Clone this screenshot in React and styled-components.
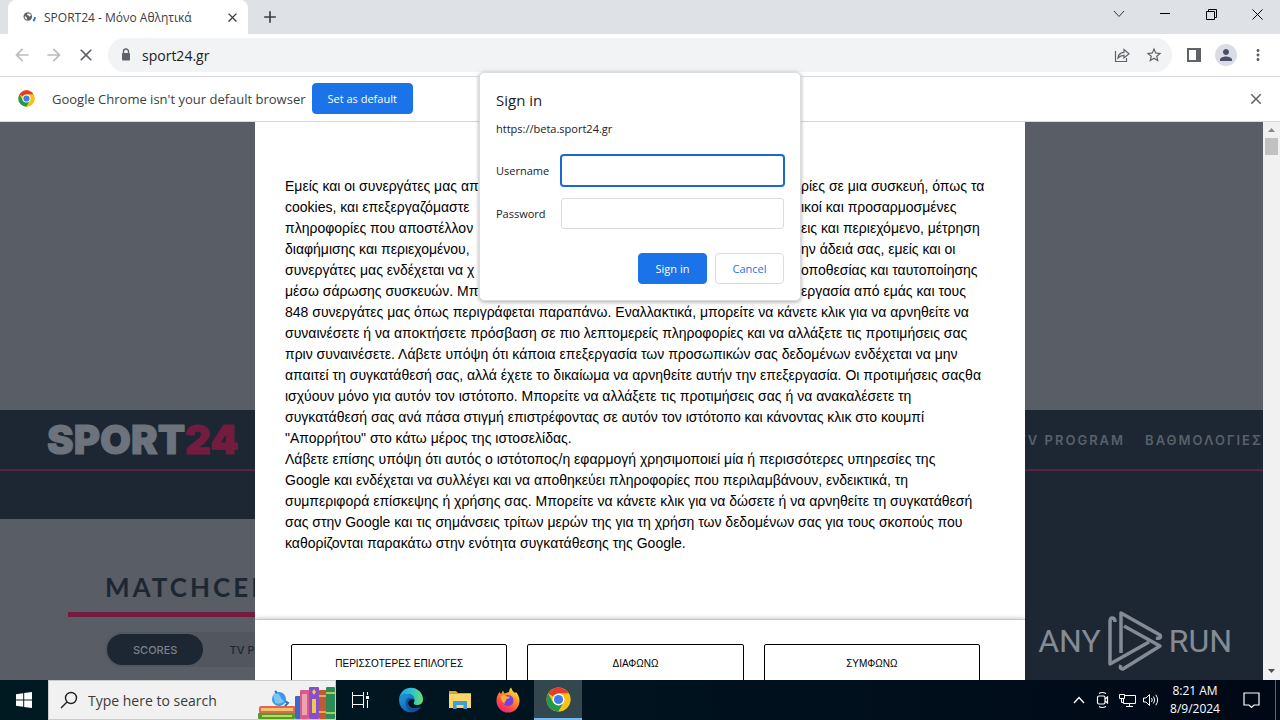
import React from 'react'
import styled, { createGlobalStyle } from 'styled-components'
import { MdArrowBack, MdArrowForward, MdClose, MdStarBorder, MdPerson, MdMoreVert, MdAdd } from 'react-icons/md'

const GlobalStyle = createGlobalStyle`
    * { box-sizing: border-box; }
    body {
        margin: 0;
        overflow: hidden;
        font-family: "Open Sans", "Noto Sans", sans-serif;
        color: #202124;
    }
    button, input { font-family: inherit; margin: 0; }
`

const Desktop = styled.div`
    position: relative;
    display: flex;
    flex-direction: column;
    height: 100vh;
    overflow: hidden;
`

const IconButton = styled.button`
    display: flex;
    align-items: center;
    justify-content: center;
    flex: none;
    width: ${p => p.$size || 32}px;
    height: ${p => p.$size || 32}px;
    padding: 0;
    border: 0;
    border-radius: 50%;
    background: transparent;
    color: ${p => p.$color || '#5f6368'};
`

/* tab strip */

const TabStrip = styled.header`
    display: flex;
    flex: none;
    height: 34px;
    padding-left: 8px;
    background: #dee1e6;
`

const Tab = styled.div`
    display: flex;
    align-items: center;
    width: 240px;
    padding: 0 8px 0 14px;
    border-radius: 8px 8px 0 0;
    background: #fff;
    font-size: 12px;
    color: #3c4043;
    svg { flex: none; }
`

const TabTitle = styled.span`
    flex: 1;
    margin-left: 6px;
    white-space: nowrap;
`

const NewTab = styled(IconButton)`
    margin: 1px 0 0 6px;
`

const WindowButtons = styled.div`
    display: flex;
    margin-left: auto;
`

const WindowButton = styled.button`
    display: flex;
    align-items: center;
    justify-content: center;
    width: 46px;
    height: 28px;
    padding: 0;
    border: 0;
    background: transparent;
    color: #000;
`

/* toolbar */

const Toolbar = styled.nav`
    display: flex;
    align-items: center;
    flex: none;
    height: 43px;
    padding: 0 6px;
    border-bottom: 1px solid #dadce0;
    background: #fff;
`

const AddressBar = styled.div`
    display: flex;
    align-items: center;
    flex: 1;
    height: 34px;
    margin: 0 6px;
    padding: 0 2px 0 10px;
    border-radius: 17px;
    background: #f1f3f4;
    color: #5f6368;
`

const AddressInput = styled.input`
    flex: 1;
    min-width: 0;
    padding: 0 0 0 8px;
    border: 0;
    outline: 0;
    background: transparent;
    font-size: 14px;
    color: #202124;
`

/* info bar */

const InfoBar = styled.div`
    display: flex;
    align-items: center;
    flex: none;
    height: 45px;
    padding: 0 8px 1px 18px;
    border-bottom: 1px solid #d5d7da;
    background: #fff;
    font-size: 13px;
    color: #3c4043;
`

const InfoText = styled.span`
    margin: 0 6px 0 17px;
    white-space: nowrap;
`

const Button = styled.button`
    min-width: 69px;
    height: 31px;
    padding: 0 15px;
    border: 1px solid ${p => (p.$primary ? '#1a73e8' : '#dadce0')};
    border-radius: 4px;
    background: ${p => (p.$primary ? '#1a73e8' : '#fff')};
    font-size: 11px;
    line-height: 28px;
    white-space: nowrap;
    color: ${p => (p.$primary ? '#fff' : '#1a73e8')};
`

const InfoClose = styled(IconButton)`
    margin-left: auto;
`

/* web page */

const Viewport = styled.div`
    position: relative;
    display: flex;
    flex: 1;
    min-height: 0;
`

const Site = styled.div`
    display: flex;
    flex-direction: column;
    flex: 1;
    min-width: 0;
    overflow: hidden;
    background: #595d66;
`

const AdSlot = styled.div`
    flex: none;
    height: 288px;
`

const SiteHeader = styled.div`
    flex: none;
    background: #1c2733;
`

const SiteNav = styled.div`
    display: flex;
    align-items: center;
    justify-content: space-between;
    height: 61px;
    padding: 0 0 0 47px;
    border-bottom: 2px solid #5b2340;
`

const SubNav = styled.div`
    height: 48px;
`

const Logo = styled.a`
    font-family: Inter, sans-serif;
    font-size: 40px;
    font-weight: 900;
    line-height: 60px;
    text-decoration: none;
    color: #6d737d;
    -webkit-text-stroke: 1px #6d737d;
    em {
        font-style: normal;
        color: #741c40;
        -webkit-text-stroke: 1px #741c40;
    }
`

const NavLinks = styled.div`
    display: flex;
    gap: 20px;
`

const NavLink = styled.a`
    font-family: Inter, sans-serif;
    font-size: 13px;
    font-weight: 600;
    letter-spacing: 2px;
    white-space: nowrap;
    text-decoration: none;
    color: #59606a;
`

const SiteBody = styled.div`
    display: grid;
    grid-template-columns: 1fr 1fr;
    flex: 1;
`

const MatchCenter = styled.section`
    padding: 51px 0 0 68px;
`

const MatchHeading = styled.h2`
    margin: 0;
    padding: 0 0 8px 37px;
    border-bottom: 5px solid #741c40;
    font-family: Lato, sans-serif;
    font-size: 26px;
    font-weight: 700;
    line-height: 34px;
    letter-spacing: 3px;
    color: #1c2733;
`

const Pills = styled.div`
    display: flex;
    margin: 15px 0 0 37px;
    padding: 2px;
    border-radius: 18px;
    background: #51565f;
`

const Pill = styled.button`
    height: 31px;
    padding: 0 26px;
    border: 0;
    border-radius: 16px;
    background: ${p => (p.$active ? '#1c2733' : 'transparent')};
    font-family: Inter, sans-serif;
    font-size: 11px;
    font-weight: 500;
    color: ${p => (p.$active ? '#7b818a' : '#1c2733')};
`

const DarkColumn = styled.aside`
    background: #1c2733;
`

const ScrollBar = styled.div`
    display: flex;
    flex-direction: column;
    align-items: center;
    flex: none;
    width: 17px;
    background: #f1f1f1;
`

const ScrollThumb = styled.div`
    width: 13px;
    height: 17px;
    margin-bottom: auto;
    background: #c1c1c1;
`

/* consent window, over the page */

const ConsentLayer = styled.div`
    position: absolute;
    inset: 0;
    display: flex;
    justify-content: center;
    pointer-events: none;
`

const Consent = styled.div`
    display: flex;
    flex-direction: column;
    width: 770px;
    max-width: 100%;
    overflow: hidden;
    background: #fff;
    pointer-events: auto;
`

const ConsentText = styled.div`
    flex: 1;
    min-height: 0;
    padding: 54px 30px 0;
    overflow: hidden;
    font-family: "Liberation Sans", sans-serif;
    font-size: 14px;
    line-height: 21px;
    color: #000;
`

const Line = styled.span`
    display: block;
    white-space: nowrap;
`

/* a line that runs on both sides of the sign in dialog */
const SplitLine = styled.span`
    display: grid;
    grid-template-columns: 1fr 1fr;
    column-gap: 322px;
    white-space: nowrap;
    span { min-width: 0; }
    span:first-child { overflow: hidden; }
`

const ConsentFooter = styled.div`
    display: flex;
    flex: none;
    gap: 20px;
    height: 61px;
    padding: 24px 45px 0 36px;
    border-top: 1px solid #c8c8c8;
    box-shadow: 0 -1px 4px rgba(0, 0, 0, 0.2);
`

const ConsentButton = styled.button`
    flex: 1;
    height: 38px;
    padding: 0;
    border: 1px solid #000;
    border-radius: 2px;
    background: #fff;
    font-family: "Liberation Sans", sans-serif;
    font-size: 10px;
    color: #000;
`

const Watermark = styled.div`
    position: absolute;
    right: 48px;
    bottom: 6px;
    display: flex;
    align-items: center;
    gap: 6px;
    font-family: Roboto, sans-serif;
    font-size: 32px;
    line-height: 66px;
    color: #858b94;
`

/* sign in dialog */

const DialogLayer = styled.div`
    position: absolute;
    inset: 72px 0 auto;
    display: flex;
    justify-content: center;
    pointer-events: none;
`

const Dialog = styled.form`
    width: 322px;
    padding: 16px;
    border: 1px solid #dadce0;
    border-radius: 5px;
    background: #fff;
    box-shadow: 0 1px 4px rgba(0, 0, 0, 0.35);
    font-size: 11px;
    pointer-events: auto;
`

const DialogTitle = styled.h1`
    margin: 0;
    font-size: 15px;
    font-weight: 400;
    line-height: 22px;
`

const DialogHost = styled.div`
    margin: 9px 0 17px;
    line-height: 18px;
`

const Fields = styled.div`
    display: grid;
    grid-template-columns: 65px 1fr;
    align-items: center;
    row-gap: 12px;
`

const Field = styled.input`
    min-width: 0;
    height: 31px;
    padding: 0 8px;
    border: 1px solid ${p => (p.$active ? '#1967d2' : '#dadce0')};
    border-radius: 3px;
    outline: 0;
    box-shadow: ${p => (p.$active ? '0 0 0 1px #1967d2' : 'none')};
    font-size: 12px;
`

const DialogButtons = styled.div`
    display: flex;
    justify-content: flex-end;
    gap: 8px;
    margin-top: 24px;
`

/* taskbar */

const Taskbar = styled.footer`
    display: flex;
    flex: none;
    height: 40px;
    background: linear-gradient(90deg, #001a22, #00131f 50%, #000816);
`

const TaskButton = styled.button`
    display: flex;
    align-items: center;
    justify-content: center;
    flex: none;
    width: ${p => p.$width || 48}px;
    height: 40px;
    padding: 0;
    border: 0;
    border-bottom: ${p => (p.$active ? '2px solid #76b9ed' : '0')};
    background: ${p => (p.$active ? '#33474f' : 'transparent')};
    color: #fff;
`

const SearchBox = styled.label`
    display: flex;
    align-items: center;
    flex: none;
    width: 288px;
    padding-left: 11px;
    border: 1px solid #c9cbcc;
    background: #f1f1f1;
    overflow: hidden;
    svg { flex: none; }
`

const SearchInput = styled.input`
    flex: 1;
    min-width: 0;
    padding: 0 0 0 10px;
    border: 0;
    outline: 0;
    background: transparent;
    font-size: 14px;
    color: #3b3b3b;
    &::placeholder { color: #3b3b3b; opacity: 1; }
`

const Apps = styled.div`
    display: flex;
`

const Tray = styled.div`
    display: flex;
    margin-left: auto;
    padding-right: 4px;
    color: #fff;
`

const Clock = styled.time`
    width: 64px;
    padding-top: 2px;
    font-size: 12px;
    line-height: 18px;
    text-align: center;
`

const ShowDesktop = styled.div`
    width: 1px;
    background: #5a626e;
`

const splitLines = [
    ['Εμείς και οι συνεργάτες μας απ', 'ρίες σε μια συσκευή, όπως τα'],
    ['cookies, και επεξεργαζόμαστε', 'ικοί και προσαρμοσμένες'],
    ['πληροφορίες που αποστέλλον', 'εις και περιεχόμενο, μέτρηση'],
    ['διαφήμισης και περιεχομένου,', 'ην άδειά σας, εμείς και οι'],
    ['συνεργάτες μας ενδέχεται να χ', 'οποθεσίας και ταυτοποίησης'],
    ['μέσω σάρωσης συσκευών. Μπ', 'εργασία από εμάς και τους'],
]

const consentLines = [
    '848 συνεργάτες μας όπως περιγράφεται παραπάνω. Εναλλακτικά, μπορείτε να κάνετε κλικ για να αρνηθείτε να',
    'συναινέσετε ή να αποκτήσετε πρόσβαση σε πιο λεπτομερείς πληροφορίες και να αλλάξετε τις προτιμήσεις σας',
    'πριν συναινέσετε. Λάβετε υπόψη ότι κάποια επεξεργασία των προσωπικών σας δεδομένων ενδέχεται να μην',
    'απαιτεί τη συγκατάθεσή σας, αλλά έχετε το δικαίωμα να αρνηθείτε αυτήν την επεξεργασία. Οι προτιμήσεις σαςθα',
    'ισχύουν μόνο για αυτόν τον ιστότοπο. Μπορείτε να αλλάξετε τις προτιμήσεις σας ή να ανακαλέσετε τη',
    'συγκατάθεσή σας ανά πάσα στιγμή επιστρέφοντας σε αυτόν τον ιστότοπο και κάνοντας κλικ στο κουμπί',
    '"Απορρήτου" στο κάτω μέρος της ιστοσελίδας.',
    'Λάβετε επίσης υπόψη ότι αυτός ο ιστότοπος/η εφαρμογή χρησιμοποιεί μία ή περισσότερες υπηρεσίες της',
    'Google και ενδέχεται να συλλέγει και να αποθηκεύει πληροφορίες που περιλαμβάνουν, ενδεικτικά, τη',
    'συμπεριφορά επίσκεψης ή χρήσης σας. Μπορείτε να κάνετε κλικ για να δώσετε ή να αρνηθείτε τη συγκατάθεσή',
    'σας στην Google και τις σημάνσεις τρίτων μερών της για τη χρήση των δεδομένων σας για τους σκοπούς που',
    'καθορίζονται παρακάτω στην ενότητα συγκατάθεσης της Google.',
]

const ChromeIcon = ({ size }) => (
    <svg width={size} height={size} viewBox="0 0 48 48">
        <circle cx="24" cy="24" r="23" fill="#fbc116" />
        <path d="M24 24 4.1 12.5A23 23 0 0 1 43.9 12.5H24Z" fill="#e33b2e" />
        <path d="M4.1 12.5A23 23 0 0 0 24 47L34 29.7 24 24 14 29.7Z" fill="#229a4b" />
        <path d="M24 47A23 23 0 0 0 43.9 12.5H24L34 29.7Z" fill="#fbc116" />
        <circle cx="24" cy="24" r="11.5" fill="#fff" />
        <circle cx="24" cy="24" r="8.8" fill="#3b7ded" />
    </svg>
)

const FaviconIcon = () => (
    <svg width="16" height="16" viewBox="0 0 16 16">
        <circle cx="5.8" cy="7.5" r="4.3" fill="#5f6368" />
        <path d="M2.8 7 4.600 8.200 5.200 10.400 4 10.200 2.800 8.800ZM5.500 4.600 8 4.800 9 6.500 7.400 7.800 6.800 6.600 5 6Z" fill="#fff" />
        <path d="M12.900 8Q13 10.300 11.300 12" fill="none" stroke="#1a73e8" strokeWidth="1.8" />
    </svg>
)

const LockIcon = () => (
    <svg width="16" height="16" viewBox="0 0 16 16">
        <path d="M5.500 7V4.500A2.500 2.500 0 0 1 10.500 4.500V7" fill="none" stroke="currentColor" strokeWidth="1.400" />
        <rect x="4" y="6" width="8" height="7.500" rx="1" fill="currentColor" />
    </svg>
)

const WindowsIcon = () => (
    <svg width="16" height="16" viewBox="0 0 16 16" fill="#fff">
        <path d="M0 2.3 7.2 1.2V7.5H0ZM8.2 1 16 0V7.5H8.2ZM0 8.5H7.2V14.8L0 13.7ZM8.2 8.5H16V16L8.2 15Z" />
    </svg>
)

const EdgeIcon = () => (
    <svg width="26" height="26" viewBox="0 0 26 26">
        <defs>
            <linearGradient id="edgeTop" x1="0" x2="1">
                <stop offset="0" stopColor="#1c9fe0" />
                <stop offset="0.5" stopColor="#2dc0d6" />
                <stop offset="1" stopColor="#6be06a" />
            </linearGradient>
            <linearGradient id="edgeLow" x1="0" x2="1" y1="0" y2="1">
                <stop offset="0" stopColor="#1f9be5" />
                <stop offset="1" stopColor="#0c4a94" />
            </linearGradient>
        </defs>
        <path d="M1 13A12 12 0 0 1 25 12.500C25 16.500 22 18 19 18 16.500 18 15.300 17 15.800 16 18 12 15 7 9.500 7 5 7 2 9.500 1 13Z" fill="url(#edgeTop)" />
        <path d="M1 13C2 9.500 5 7 9.500 7 13.500 7 16.500 9.500 16.400 13 14.500 10.800 10 12 10 16 10 20.500 15.500 22.500 21 20.500 22.500 20 23.300 19.500 22.600 20.500A12 12 0 0 1 1 13Z" fill="url(#edgeLow)" />
        <path d="M9.500 11.500C6 15 7.500 22.500 14 24.900 18 24.700 21 22.800 22.700 20.300 18 22.500 10.300 21.500 10 16 10 13 12.500 11.800 14.500 12.200 13 10.800 11 10.600 9.500 11.500Z" fill="#114f9f" />
    </svg>
)

const FolderIcon = () => (
    <svg width="24" height="20" viewBox="0 0 24 20">
        <path d="M1 1H8L10 3H23V18H1Z" fill="#e0a32c" />
        <path d="M1 4H23V18H1Z" fill="#fbd768" />
        <path d="M5 19V12Q5 11 6 11H18Q19 11 19 12V19H15.500V15H8.500V19Z" fill="#3f9bdc" />
    </svg>
)

const FirefoxIcon = () => (
    <svg width="26" height="26" viewBox="0 0 26 26">
        <defs>
            <linearGradient id="fox" x1="0.8" x2="0.2" y1="0" y2="1">
                <stop offset="0" stopColor="#fff04a" />
                <stop offset="0.35" stopColor="#ff9a26" />
                <stop offset="0.7" stopColor="#ff4a45" />
                <stop offset="1" stopColor="#e21c80" />
            </linearGradient>
        </defs>
        <path d="M3 7.500 4.500 5 6 7 8 3.500 9.500 6.500 14 5Q14 2 16 0.500 17 4 20 6L21 5Q24.500 9 24.500 14A11.500 11.500 0 0 1 1.500 14Q1.300 10 3 7.500Z" fill="url(#fox)" />
        <circle cx="13" cy="13.500" r="5.500" fill="#7a3fe0" />
        <path d="M5.500 9Q9 7.500 12 9.500L15 9.800Q14.500 11.500 12 12 10.500 12.500 11 14 9 14.500 9.500 17 6 14 5.500 9Z" fill="#ffab2d" />
    </svg>
)

const BooksIcon = () => (
    <svg width="77" height="38" viewBox="0 0 77 38">
        <rect x="1" y="25" width="37" height="8" rx="2" fill="#d96b54" />
        <rect x="3" y="27" width="32" height="3" fill="#f3c06c" />
        <rect x="0" y="32" width="37" height="6" rx="1" fill="#5a9a2c" />
        <rect x="4" y="34" width="30" height="2" fill="#b4dc59" />
        <circle cx="21" cy="18" r="7" fill="#3d96e8" />
        <path d="M15 14Q20 10 22 15T27 20Q22 24 17 22Z" fill="#7cc7f7" />
        <path d="M17 10 19 12M27 20 30 22 27 25" fill="none" stroke="#2d6fc0" strokeWidth="2" />
        <rect x="37" y="15" width="6" height="23" rx="1" fill="#3d67c8" />
        <rect x="42" y="9" width="9" height="29" rx="1" fill="#d95c86" />
        <rect x="44" y="13" width="5" height="21" fill="#f0a0ae" />
        <rect x="51" y="6" width="10" height="32" rx="1" fill="#8850c8" />
        <path d="M56 8 58 11 56 14 54 11ZM54 18H58V32H54Z" fill="#f0c84f" />
        <rect x="61" y="9" width="8" height="29" rx="1" fill="#c05a35" />
        <path d="M61 14H69V16H61ZM61 30H69V32H61Z" fill="#ecaa4f" />
        <rect x="68" y="6" width="9" height="32" rx="1" fill="#2e8b57" />
        <path d="M68 11H77V13H68ZM68 31H77V33H68Z" fill="#a6cf62" />
    </svg>
)

const AnyRunIcon = () => (
    <svg width="56" height="64" viewBox="0 0 56 64" fill="none" stroke="#858b94" strokeWidth="3.500" strokeLinejoin="round">
        <path d="M14 44V4L53 26Q55 30 49 29" />
        <path d="M17 17 53 37 16 60Q12 60 14 56" />
        <path d="M8 13Q8 9 5 9 3 9 3 13V55L42 33" />
    </svg>
)

function BrowserChrome() {
    return (
        <>
            <TabStrip>
                <Tab>
                    <FaviconIcon />
                    <TabTitle>SPORT24 - Μόνο Αθλητικά</TabTitle>
                    <IconButton $size={16} $color="#3c4043" aria-label="Close tab"><MdClose size={15} /></IconButton>
                </Tab>
                <NewTab $color="#3c4043" aria-label="New tab"><MdAdd size={20} /></NewTab>
                <WindowButtons>
                    <WindowButton aria-label="Search tabs">
                        <svg width="12" height="8" viewBox="0 0 12 8" fill="none" stroke="#333"><path d="M1 1 6 6.500 11 1" /></svg>
                    </WindowButton>
                    <WindowButton aria-label="Minimize">
                        <svg width="10" height="2" viewBox="0 0 10 2"><path d="M0 0H10V1H0Z" /></svg>
                    </WindowButton>
                    <WindowButton aria-label="Restore">
                        <svg width="11" height="11" viewBox="0 0 11 11" fill="none" stroke="#000"><path d="M0.500 2.500H8.500V10.500H0.500ZM2.500 2.500V0.500H10.500V8.500H8.500" /></svg>
                    </WindowButton>
                    <WindowButton aria-label="Close">
                        <svg width="11" height="11" viewBox="0 0 11 11" fill="none" stroke="#000"><path d="M0.500 0.500 10.500 10.500M10.500 0.500 0.500 10.500" /></svg>
                    </WindowButton>
                </WindowButtons>
            </TabStrip>
            <Toolbar>
                <IconButton $color="#babcbe" aria-label="Back"><MdArrowBack size={20} /></IconButton>
                <IconButton $color="#babcbe" aria-label="Forward"><MdArrowForward size={20} /></IconButton>
                <IconButton aria-label="Stop loading"><MdClose size={20} /></IconButton>
                <AddressBar>
                    <LockIcon />
                    <AddressInput aria-label="Address" defaultValue="sport24.gr" />
                    <IconButton aria-label="Share">
                        <svg width="16" height="16" viewBox="0 0 16 16" fill="none" stroke="currentColor" strokeWidth="1.200">
                            <path d="M1.500 4V14.500H12.500V11" />
                            <path d="M4 11Q4.500 5.500 10 5.300V2.500L15 6.800 10 11V8.300Q6.500 8.200 4 11Z" />
                        </svg>
                    </IconButton>
                    <IconButton aria-label="Bookmark"><MdStarBorder size={18} /></IconButton>
                </AddressBar>
                <IconButton aria-label="Side panel">
                    <svg width="14" height="14" viewBox="0 0 14 14" fill="currentColor"><path d="M0 0H14V14H0ZM2 2V12H9V2Z" fillRule="evenodd" /></svg>
                </IconButton>
                <IconButton aria-label="Profile">
                    <svg width="22" height="22" viewBox="0 0 22 22"><circle cx="11" cy="11" r="11" fill="#dadce6" /><MdPerson x="2" y="2" size={18} color="#4a5068" /></svg>
                </IconButton>
                <IconButton aria-label="Menu"><MdMoreVert size={18} /></IconButton>
            </Toolbar>
            <InfoBar>
                <ChromeIcon size={17} />
                <InfoText>Google Chrome isn't your default browser</InfoText>
                <Button $primary>Set as default</Button>
                <InfoClose aria-label="Dismiss"><MdClose size={18} /></InfoClose>
            </InfoBar>
        </>
    )
}

function WebPage() {
    return (
        <Viewport>
            <Site>
                <AdSlot />
                <SiteHeader>
                    <SiteNav>
                        <Logo href="#">SPORT<em>24</em></Logo>
                        <NavLinks>
                            <NavLink href="#">TV PROGRAM</NavLink>
                            <NavLink href="#">ΒΑΘΜΟΛΟΓΙΕΣ</NavLink>
                        </NavLinks>
                    </SiteNav>
                    <SubNav />
                </SiteHeader>
                <SiteBody>
                    <MatchCenter>
                        <MatchHeading>MATCHCENTER</MatchHeading>
                        <Pills>
                            <Pill $active>SCORES</Pill>
                            <Pill>TV PROGRAM</Pill>
                        </Pills>
                    </MatchCenter>
                    <DarkColumn />
                </SiteBody>
            </Site>
            <ScrollBar>
                <svg width="17" height="16" viewBox="0 0 17 16"><path d="M5 10 8.500 6 12 10Z" fill="#8a8a8a" /></svg>
                <ScrollThumb />
                <svg width="17" height="17" viewBox="0 0 17 17"><path d="M5 6 8.500 10 12 6Z" fill="#505050" /></svg>
            </ScrollBar>
            <ConsentLayer>
                <Consent>
                    <ConsentText>
                        {splitLines.map(([start, end]) => (
                            <SplitLine key={start}>
                                <span>{start}</span>
                                <span>{end}</span>
                            </SplitLine>
                        ))}
                        {consentLines.map(line => <Line key={line}>{line}</Line>)}
                    </ConsentText>
                    <ConsentFooter>
                        <ConsentButton>ΠΕΡΙΣΣΟΤΕΡΕΣ ΕΠΙΛΟΓΕΣ</ConsentButton>
                        <ConsentButton>ΔΙΑΦΩΝΩ</ConsentButton>
                        <ConsentButton>ΣΥΜΦΩΝΩ</ConsentButton>
                    </ConsentFooter>
                </Consent>
            </ConsentLayer>
            <Watermark>
                <span>ANY</span>
                <AnyRunIcon />
                <span>RUN</span>
            </Watermark>
        </Viewport>
    )
}

function SignInDialog() {
    return (
        <DialogLayer>
            <Dialog onSubmit={e => e.preventDefault()}>
                <DialogTitle>Sign in</DialogTitle>
                <DialogHost>https://beta.sport24.gr</DialogHost>
                <Fields>
                    <label htmlFor="username">Username</label>
                    <Field id="username" type="text" $active />
                    <label htmlFor="password">Password</label>
                    <Field id="password" type="password" />
                </Fields>
                <DialogButtons>
                    <Button $primary>Sign in</Button>
                    <Button type="button">Cancel</Button>
                </DialogButtons>
            </Dialog>
        </DialogLayer>
    )
}

function WindowsTaskbar() {
    return (
        <Taskbar>
            <TaskButton aria-label="Start"><WindowsIcon /></TaskButton>
            <SearchBox>
                <svg width="18" height="18" viewBox="0 0 18 18" fill="none" stroke="#222" strokeWidth="1.400">
                    <circle cx="11" cy="7" r="5.500" />
                    <path d="M7 11 1 17" />
                </svg>
                <SearchInput type="text" placeholder="Type here to search" aria-label="Search" />
                <BooksIcon />
            </SearchBox>
            <Apps>
                <TaskButton aria-label="Task view">
                    <svg width="17" height="16" viewBox="0 0 17 16" fill="none" stroke="#fff">
                        <path d="M0.500 0V3.500H11.500V0M0.500 16V12.500H11.500V16M0.500 3.500V12.500M11.500 3.500V12.500M15.500 0V3M15.500 8V16" />
                        <path d="M14 4H17V7H14Z" fill="#fff" stroke="none" />
                    </svg>
                </TaskButton>
                <TaskButton $width={54} aria-label="Microsoft Edge"><EdgeIcon /></TaskButton>
                <TaskButton aria-label="File Explorer" $width={44}><FolderIcon /></TaskButton>
                <TaskButton $width={52} aria-label="Firefox"><FirefoxIcon /></TaskButton>
                <TaskButton $active aria-label="Google Chrome"><ChromeIcon size={25} /></TaskButton>
            </Apps>
            <Tray>
                <TaskButton $width={24} aria-label="Show hidden icons">
                    <svg width="12" height="8" viewBox="0 0 12 8" fill="none" stroke="#fff" strokeWidth="1.300"><path d="M1 7 6 1.500 11 7" /></svg>
                </TaskButton>
                <TaskButton $width={24} aria-label="Meet now">
                    <svg width="14" height="18" viewBox="0 0 14 18" fill="none" stroke="#fff" strokeWidth="1.200">
                        <path d="M3 2.500Q6 0.500 10 2.500M3 15.500Q6 17.500 10 15.500" />
                        <rect x="1.500" y="5" width="7.500" height="8" rx="1.500" />
                        <path d="M9 8 11.500 6V12L9 10" />
                    </svg>
                </TaskButton>
                <TaskButton $width={24} aria-label="Network">
                    <svg width="17" height="15" viewBox="0 0 17 15" fill="none" stroke="#fff">
                        <path d="M5.500 2.500H16.500V10.500H4.500V6M10.500 10.500V13.500M7 13.500H14M0.500 1.500H5.500V5.500H0.500ZM2.500 5.500V9.500H4.500" />
                    </svg>
                </TaskButton>
                <TaskButton $width={24} aria-label="Volume">
                    <svg width="17" height="14" viewBox="0 0 17 14" fill="none" stroke="#fff">
                        <path d="M0.500 5H3L6.500 1.500V12.500L3 9H0.500ZM8.500 5Q10 7 8.500 9M10.500 3.500Q13 7 10.500 10.500M12.800 1.800Q16.500 7 12.800 12.200" />
                    </svg>
                </TaskButton>
                <Clock>8:21 AM<br />8/9/2024</Clock>
                <TaskButton $width={48} aria-label="Notifications">
                    <svg width="17" height="17" viewBox="0 0 17 17" fill="none" stroke="#fff" strokeWidth="1.200"><path d="M1 1H16V13H11L8.500 15.500 6 13H1Z" /></svg>
                </TaskButton>
                <ShowDesktop />
            </Tray>
        </Taskbar>
    )
}

export default function App() {
    return (
        <Desktop>
            <GlobalStyle />
            <BrowserChrome />
            <WebPage />
            <WindowsTaskbar />
            <SignInDialog />
        </Desktop>
    )
}
